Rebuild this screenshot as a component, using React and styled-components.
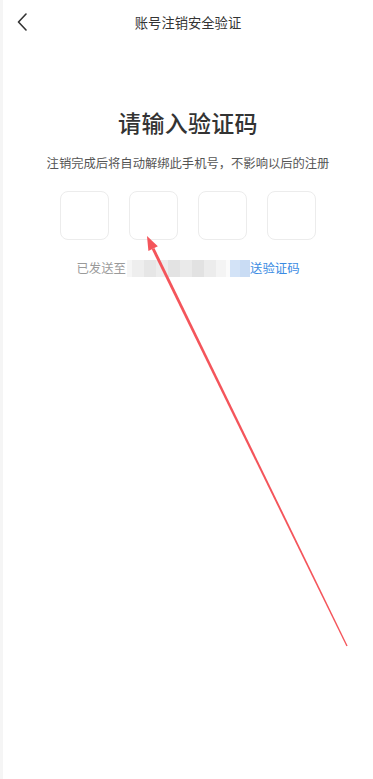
import React from 'react'
import styled, { createGlobalStyle } from 'styled-components'

const Global = createGlobalStyle`
  html, body {
    margin: 0;
    padding: 0;
    background: #fff;
    font-family: "Noto Sans CJK SC", "Noto Sans", sans-serif;
  }
`

const Page = styled.div`
  position: relative;
  min-height: 779px;
  border-left: 3px solid #f5f5f5;
  background: #fff;
  display: flex;
  flex-direction: column;
  align-items: center;
`

const Header = styled.div`
  align-self: stretch;
  height: 44px;
  display: flex;
  align-items: center;
  justify-content: center;
  position: relative;
`

const Back = styled.div`
  position: absolute;
  left: 12px;
  top: 12px;
  width: 14px;
  height: 20px;
  display: flex;
  align-items: center;
  justify-content: center;
`

const Title = styled.div`
  font-size: 13.3px;
  color: #333;
`

const Heading = styled.h1`
  margin: 62px 0 0;
  font-size: 23px;
  line-height: 32px;
  font-weight: 500;
  color: #333;
  letter-spacing: 0.3px;
`

const Sub = styled.p`
  margin: 15px 0 0;
  font-size: 12.3px;
  line-height: 20px;
  color: #555;
`

const Codes = styled.div`
  margin-top: 18px;
  display: flex;
  gap: 20px;
`

const CodeBox = styled.div`
  width: 47px;
  height: 47px;
  border: 1px solid #ececec;
  border-radius: 8px;
  background: #fff;
`

const Hint = styled.div`
  margin-top: 19px;
  display: flex;
  align-items: center;
  height: 18px;
  font-size: 12.4px;
  color: #9a9a9a;
`

const Mosaic = styled.div`
  display: flex;
  height: 17px;
  margin-left: 1px;
`

const Cell = styled.div`
  width: ${(p) => p.w}px;
  height: 100%;
  background: ${(p) => p.c};
`

const Link = styled.span`
  color: #3a8be3;
`

const Annotation = styled.svg`
  position: absolute;
  left: -3px;
  top: 0;
  pointer-events: none;
`

const cells = [
  { w: 5, c: '#f6f6f6' },
  { w: 12, c: '#eeeeee' },
  { w: 12, c: '#e6e6e6' },
  { w: 12, c: '#ededed' },
  { w: 12, c: '#e3e3e3' },
  { w: 12, c: '#eaeaea' },
  { w: 12, c: '#e2e2e2' },
  { w: 12, c: '#ececec' },
  { w: 10, c: '#f4f4f4' },
  { w: 4, c: '#fbfbfb' },
  { w: 10, c: '#d3e3f7' },
  { w: 10, c: '#c9dcf4' },
]

export default function App() {
  return (
    <>
      <Global />
      <Page>
        <Header>
          <Back>
            <svg width="10" height="18" viewBox="0 0 10 18">
              <path d="M9 1 L1.5 9 L9 17" fill="none" stroke="#333" strokeWidth="1.6" strokeLinecap="round" strokeLinejoin="round" />
            </svg>
          </Back>
          <Title>账号注销安全验证</Title>
        </Header>
        <Heading>请输入验证码</Heading>
        <Sub>注销完成后将自动解绑此手机号，不影响以后的注册</Sub>
        <Codes>
          <CodeBox />
          <CodeBox />
          <CodeBox />
          <CodeBox />
        </Codes>
        <Hint>
          <span>已发送至</span>
          <Mosaic>
            {cells.map((m, i) => (
              <Cell key={i} w={m.w} c={m.c} />
            ))}
          </Mosaic>
          <Link>送验证码</Link>
        </Hint>
        <Annotation width="373" height="779" viewBox="0 0 373 779">
          <polygon points="347.6,645.7 346.4,646.3 151.8,249.3 154.4,247.9" fill="#f4555b" />
          <polygon points="147,236 157.8,246.2 148.4,250.9" fill="#f4555b" />
        </Annotation>
      </Page>
    </>
  )
}
